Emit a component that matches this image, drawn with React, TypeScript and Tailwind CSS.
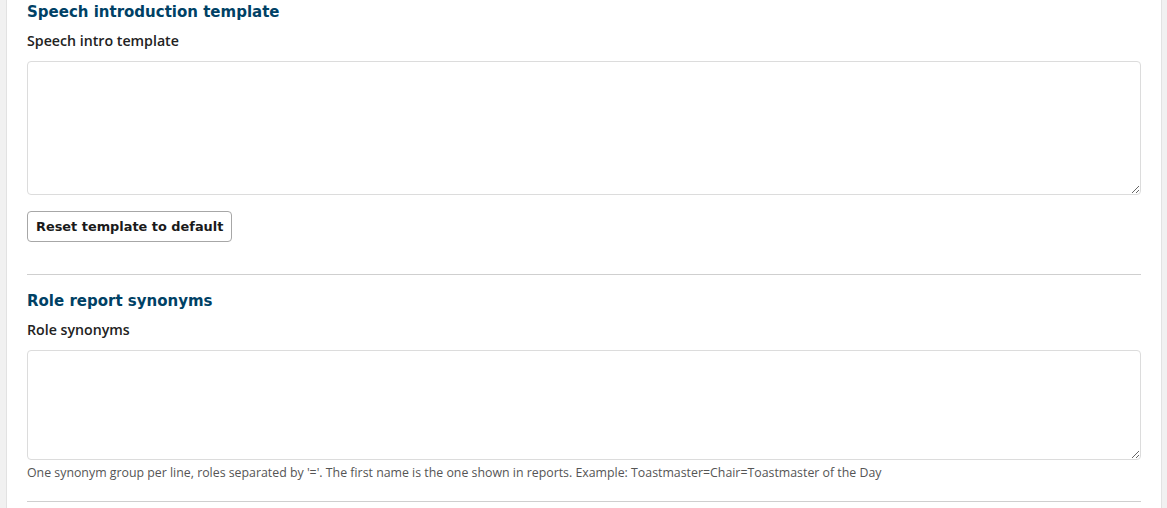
export default function App() {
  return (
    <div className="flex min-h-[508px] bg-white">
      <div className="w-[7px] shrink-0 border-r border-[#e2e2e2] bg-[#f1f1f1]" />
      <main className="flex-1 px-[20px]">
        <section>
          <h2 className="pt-[2px] font-['DejaVu_Sans',sans-serif] text-[15px] font-bold leading-[21px] text-[#004165]">
            Speech introduction template
          </h2>
          <label className="mt-[8px] block font-['Open_Sans',sans-serif] text-[14.2px] font-semibold leading-[20px] text-[#222]">
            Speech intro template
          </label>
          <textarea className="mt-[10px] block h-[134px] w-full rounded-[4px] border border-[#dcdcdc] bg-white" />
          <button className="mt-[16px] h-[31px] rounded-[4px] border border-[#a7a7a7] bg-white px-[8px] font-['DejaVu_Sans',sans-serif] text-[12.9px] font-bold text-[#1a1a1a]">
            Reset template to default
          </button>
        </section>
        <hr className="mt-[32px] border-t border-[#cfcfcf]" />
        <section>
          <h2 className="mt-[16px] font-['DejaVu_Sans',sans-serif] text-[15px] font-bold leading-[21px] text-[#004165]">
            Role report synonyms
          </h2>
          <label className="mt-[8px] block font-['Open_Sans',sans-serif] text-[14.2px] font-semibold leading-[20px] text-[#222]">
            Role synonyms
          </label>
          <textarea className="mt-[10px] block h-[110px] w-full rounded-[4px] border border-[#dcdcdc] bg-white" />
          <p className="mt-[4px] font-['Open_Sans',sans-serif] text-[12.35px] leading-[18px] text-[#555]">
            One synonym group per line, roles separated by '='. The first name is the one shown in reports. Example: Toastmaster=Chair=Toastmaster of the Day
          </p>
        </section>
        <hr className="mt-[19px] border-t border-[#cfcfcf]" />
      </main>
      <div className="w-[6px] shrink-0 border-l border-[#e2e2e2] bg-[#f1f1f1]" />
    </div>
  );
}
